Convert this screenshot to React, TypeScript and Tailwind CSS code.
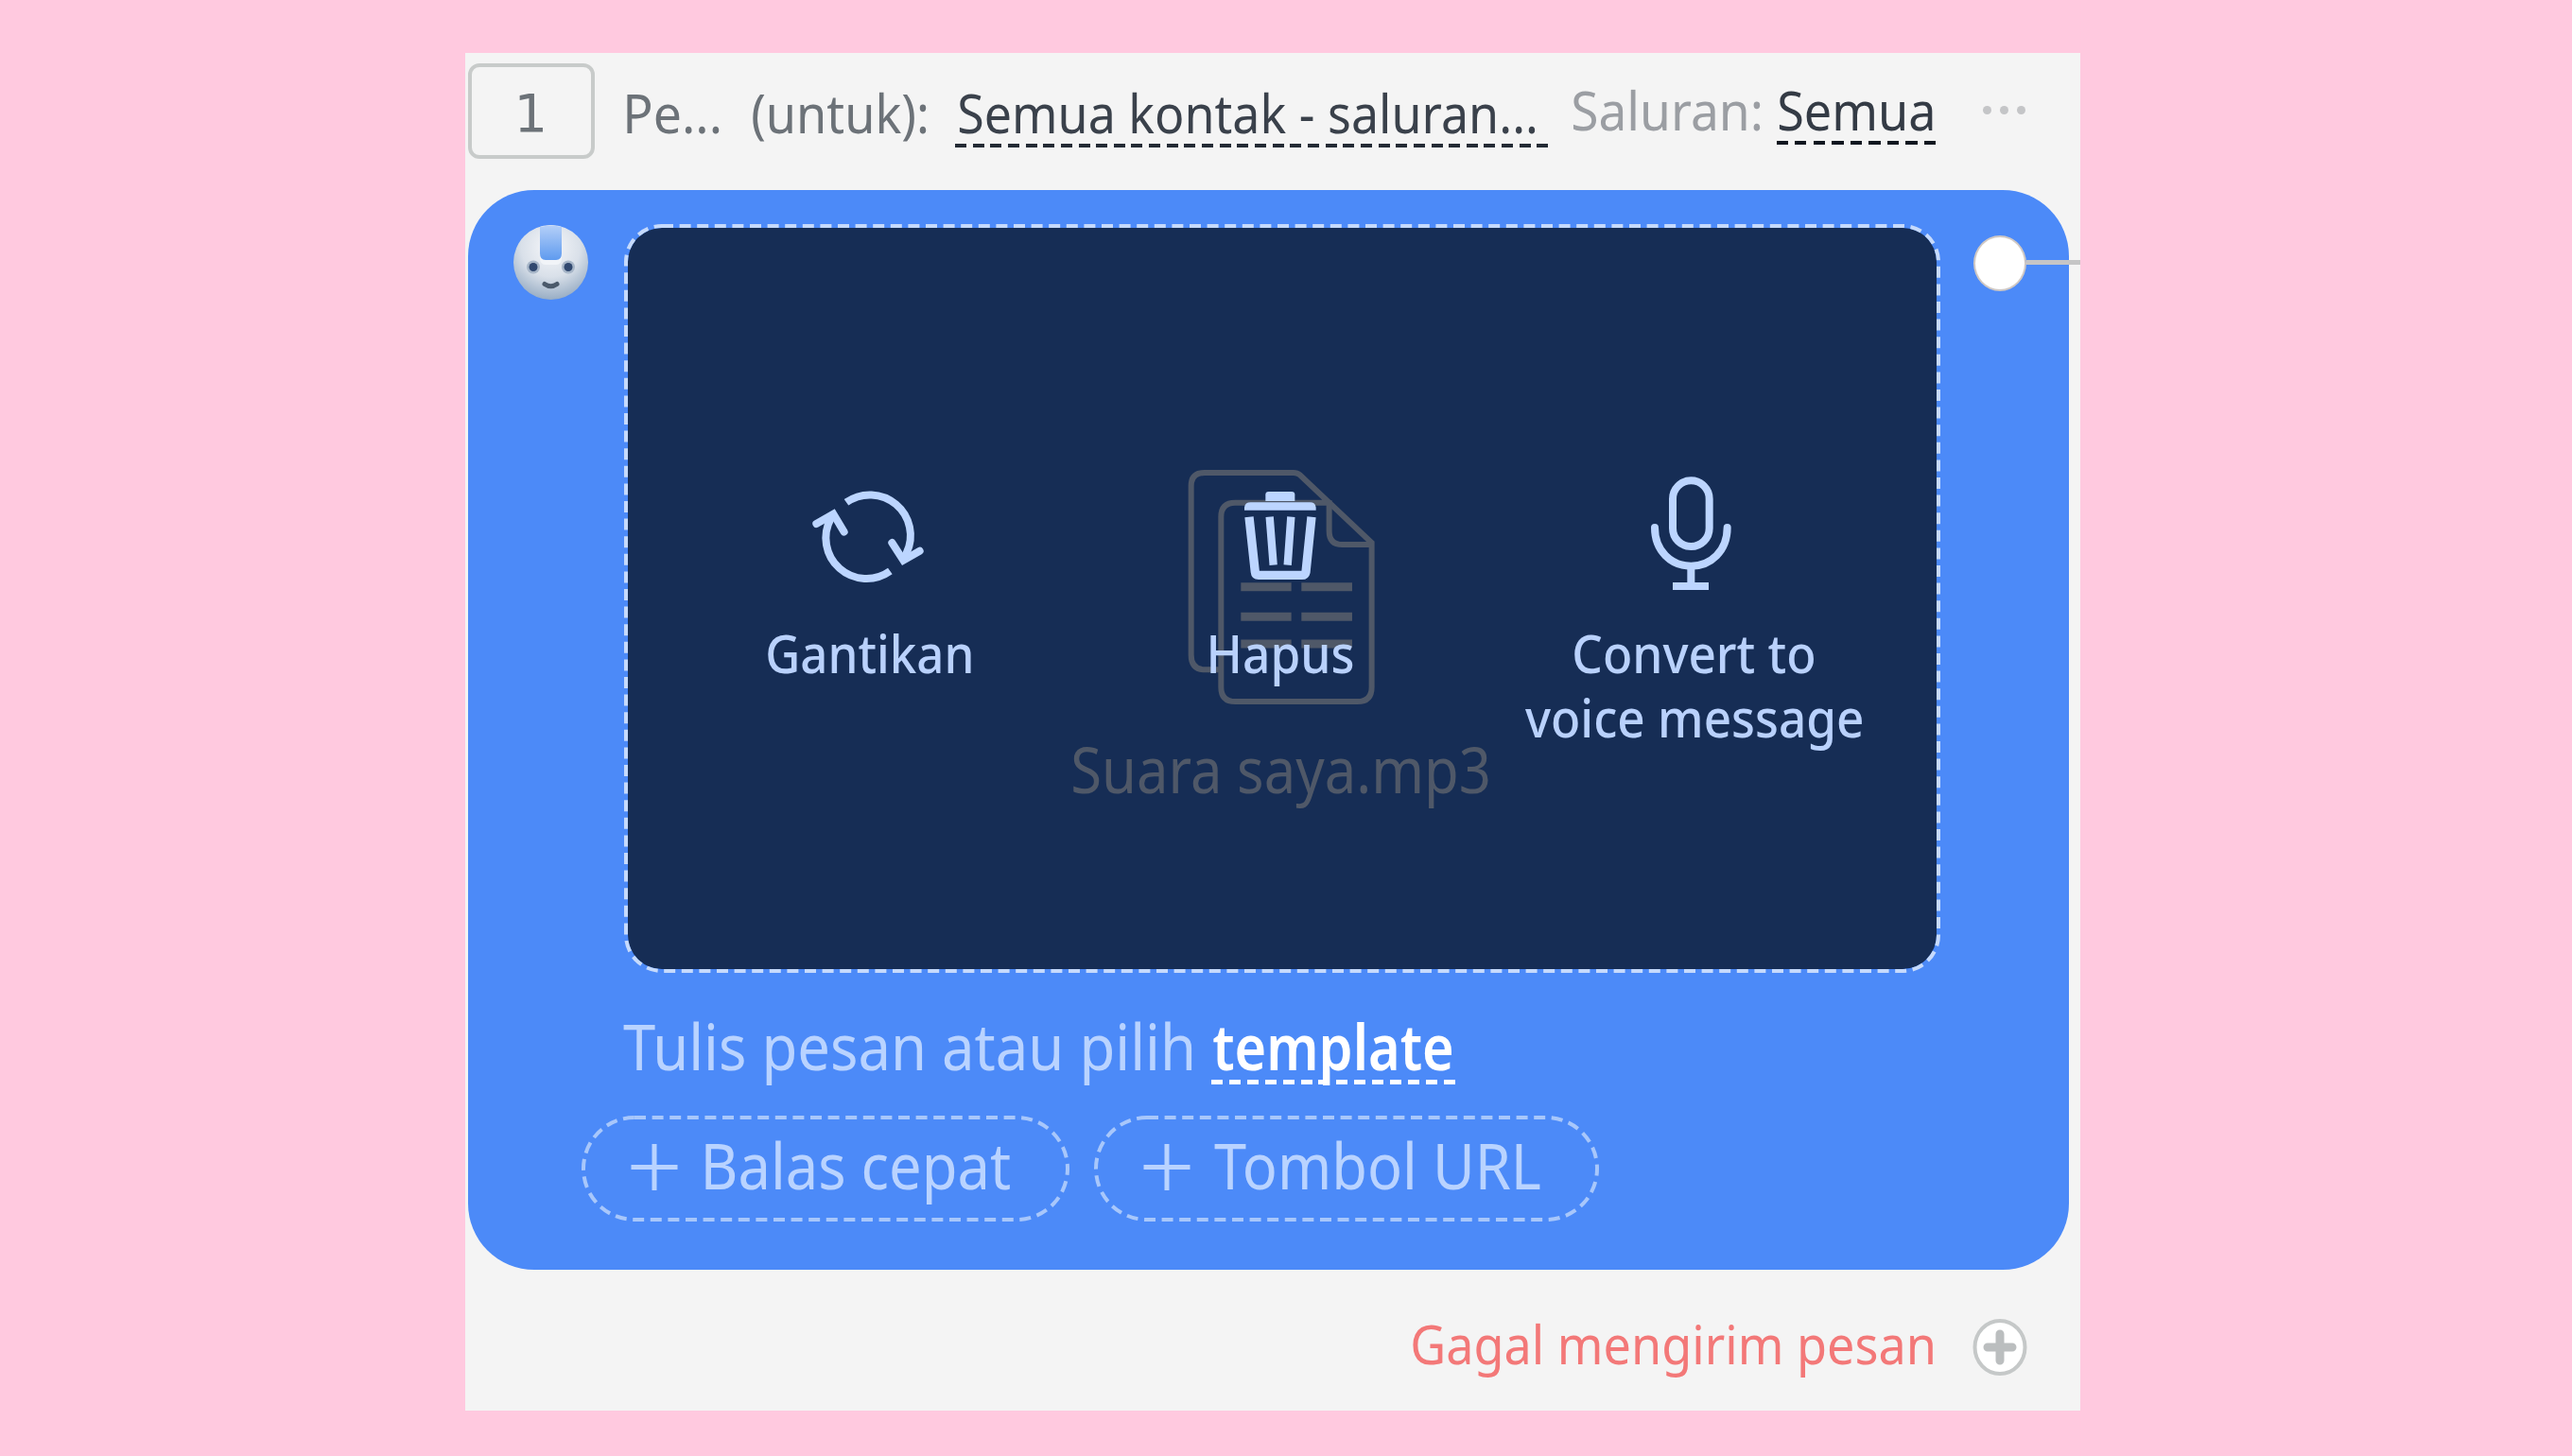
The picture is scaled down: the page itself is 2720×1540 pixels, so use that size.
import React from "react";

const FAMILY = '"Noto Sans", sans-serif';

/** Horizontal bounds of the ink of a line of text at a font size. */
function measureInk(text: string, size: number, weight: number, family: string) {
  const ctx = document.createElement("canvas").getContext("2d")!;
  ctx.font = `${weight} ${size}px ${family}`;
  const m = ctx.measureText(text);
  return { left: m.actualBoundingBoxLeft, width: m.actualBoundingBoxLeft + m.actualBoundingBoxRight };
}

type FitProps = {
  children: string;
  width: number;
  size?: number;
  weight?: number;
  family?: string;
  className?: string;
};

/** One line of text condensed so that it fills exactly `width` pixels. */
function Fit({ children, width, size = 57, weight = 400, family = FAMILY, className = "" }: FitProps) {
  const ink = measureInk(children, size, weight, family);
  const s = width / ink.width;
  return (
    <span
      className={`block shrink-0 whitespace-pre ${className}`}
      style={{ width, fontSize: size, fontWeight: weight, fontFamily: family }}
    >
      <span
        className="inline-block origin-left align-top"
        style={{ transform: `translateX(${ink.left * s}px) scaleX(${s})` }}
      >
        {children}
      </span>
    </span>
  );
}

function DashedFrame({ w, h, r, color }: { w: number; h: number; r: number; color: string }) {
  return (
    <svg className="pointer-events-none absolute inset-0" width={w} height={h} fill="none">
      <rect x="2" y="2" width={w - 4} height={h - 4} rx={r} stroke={color} strokeWidth="4" strokeDasharray="12 6.6" />
    </svg>
  );
}

function RobotAvatar() {
  return (
    <svg className="mt-px ml-12 shrink-0" width="80" height="79" viewBox="0 0 80 79">
      <defs>
        <radialGradient id="head" cx="0.5" cy="0.3" r="0.72">
          <stop offset="0" stopColor="#f6f7fa" />
          <stop offset="0.55" stopColor="#d9e0e9" />
          <stop offset="1" stopColor="#94aac2" />
        </radialGradient>
        <linearGradient id="stripe" x1="0" y1="0" x2="0" y2="1">
          <stop offset="0" stopColor="#b4cff8" />
          <stop offset="1" stopColor="#5f9bef" />
        </linearGradient>
      </defs>
      <ellipse cx="39.500" cy="39.500" rx="39.500" ry="39.500" fill="url(#head)" />
      <path d="M28 2Q40 -1 51 2V35Q51 42 45 42H34Q28 42 28 35Z" fill="#f1f4f8" />
      <path d="M28 2Q40 -1 51 2V30Q51 37 45 37H34Q28 37 28 30Z" fill="url(#stripe)" />
      <circle cx="21" cy="44.500" r="7" fill="#a7b6c8" />
      <circle cx="58" cy="44.500" r="7" fill="#a7b6c8" />
      <circle cx="21" cy="44.500" r="4.500" fill="#30486f" />
      <circle cx="58" cy="44.500" r="4.500" fill="#30486f" />
      <path d="M33 62.500Q39.500 67 46 62.500" fill="none" stroke="#4b5a6b" strokeWidth="5" strokeLinecap="round" />
    </svg>
  );
}

function FilesIcon() {
  return (
    <svg width="203.300" height="253.300" viewBox="460 72 610 760" fill="none" stroke="#4f5868" strokeWidth="18">
      <path d="M572 715H522Q477 715 477 668V132Q477 90 520 90H802Q814 90 822 97L1050 312V770Q1050 816 1005 816H617Q572 816 572 770V230Q572 185 617 185H915" />
      <path d="M915 178V275Q915 318 957 318H1050" />
      <path d="M635 452H795M827 452H988M635 547H795M827 547H988M635 633H795M827 633H988" strokeWidth="27" />
    </svg>
  );
}

const iconProps = {
  width: 128,
  height: 128,
  fill: "none",
  stroke: "#bcd5ff",
  className: "shrink-0",
};

function ReplaceIcon() {
  return (
    <svg {...iconProps} viewBox="225 90 384 384" strokeWidth="24">
      <path d="M345 184A129 129 0 0 1 536 345L528 366" />
      <path d="M484 402A129 129 0 0 1 296 235L304 222" />
      <path d="M490 312L526 368L578 338M250 252L304 221L338 278" strokeLinecap="round" />
    </svg>
  );
}

function TrashIcon() {
  return (
    <svg {...iconProps} viewBox="573 90 384 384" strokeWidth="25">
      <path d="M715 180V160Q715 150 725 150H798Q808 150 808 160V180Z" fill="#bcd5ff" stroke="none" />
      <path d="M648 209V200Q650 184 668 184H856Q873 184 875 200V209Z" fill="#bcd5ff" stroke="none" />
      <path d="M663 230L682 405Q683 415 693 415H831Q841 415 843 405L861 230" strokeWidth="28" />
      <path d="M728 230L740 383M796 230L785 383" />
    </svg>
  );
}

function MicIcon() {
  return (
    <svg {...iconProps} viewBox="441 90 384 384" strokeWidth="24">
      <rect x="567" y="115" width="116" height="209" rx="58" />
      <path d="M510 264C510 338 562 386 625 386S740 338 740 264" strokeLinecap="round" />
      <path d="M625 388V450M567 450H681" />
    </svg>
  );
}

function Action({ icon, children }: { icon: React.ReactNode; children: React.ReactNode }) {
  return (
    <button className="flex w-[436px] flex-col items-center leading-[67.5px] text-[#b9d1fc]">
      {icon}
      <span className="mt-[29px] flex flex-col items-center">{children}</span>
    </button>
  );
}

function AddButton({ w, label, labelWidth, gap }: { w: number; label: string; labelWidth: number; gap: number }) {
  return (
    <button className="relative flex h-28 items-start pt-[16px] pl-[52px] leading-[72px]" style={{ width: w }}>
      <DashedFrame w={w} h={112} r={54} color="#a8c7fb" />
      <svg className="mt-[14px] shrink-0" width="50" height="49" stroke="#b9d3ff" strokeWidth="5">
        <path d="M0.500 24.500H49.500M25 0V49" />
      </svg>
      <span style={{ marginLeft: gap }}>
        <Fit width={labelWidth} size={67}>{label}</Fit>
      </span>
    </button>
  );
}

export default function App() {
  return (
    <div className="h-[1540px] w-[2720px] overflow-hidden bg-[#ffc9df] pt-14 font-['Noto_Sans',sans-serif]">
      <main className="ml-[492px] h-[1436px] w-[1708px] overflow-hidden bg-[#f4f4f4] pl-[3px]">
        <header className="flex h-[145px] items-start leading-[64px] text-[#6c7278]">
          <div className="mt-[11px] flex h-[101px] w-[134px] justify-center rounded-xl border-4 border-[#c8cbca] pt-[17px]">
            <Fit width={25} size={56} family='"DejaVu Sans", sans-serif'>1</Fit>
          </div>
          <Fit width={98} className="mt-[31px] ml-[34px]">Pe...</Fit>
          <Fit width={184} className="mt-[31px] ml-[35px]">(untuk):</Fit>
          <a className="mt-[31px] ml-[30px] w-[631px] text-[#3a414b]">
            <Fit width={610} className="ml-[4px]">Semua kontak - saluran...</Fit>
            <span className="mt-px block h-1 bg-[repeating-linear-gradient(90deg,#242b35_0_12px,transparent_12px_18.65px)]" />
          </a>
          <Fit width={199} className="mt-[28px] ml-[22px] text-[#9b9ea3]">Saluran:</Fit>
          <a className="mt-[28px] ml-[17px] w-[168px] text-[#343b45]">
            <Fit width={163} className="ml-[2px]">Semua</Fit>
            <span className="mt-px block h-1 bg-[repeating-linear-gradient(90deg,#10161f_0_12px,transparent_12px_19.5px)]" />
          </a>
          <div className="mt-[56px] ml-[50px] flex gap-[9px]">
            <i className="size-[9px] rounded-full bg-[#c4c5c7]" />
            <i className="size-[9px] rounded-full bg-[#c4c5c7]" />
            <i className="size-[9px] rounded-full bg-[#c4c5c7]" />
          </div>
        </header>

        <section className="h-[1142px] w-[1693px] rounded-[70px] bg-[#4c8af8] pt-9">
          <div className="flex items-start">
            <RobotAvatar />
            <div className="relative ml-[37px] h-[792px] w-[1392px] shrink-0 rounded-[40px] border-4 border-transparent bg-[#162d55] bg-clip-padding">
              <div className="flex flex-col items-center pt-[253px]">
                <FilesIcon />
                <Fit width={439} size={67} className="mt-[30px] mr-[4px] leading-[72px] text-[#4f5868]">Suara saya.mp3</Fit>
              </div>
              <div className="absolute inset-0 flex pt-[259px] pl-[37px]">
                <Action icon={<ReplaceIcon />}>
                  <Fit width={215} weight={500}>Gantikan</Fit>
                </Action>
                <Action icon={<TrashIcon />}>
                  <Fit width={151} weight={500}>Hapus</Fit>
                </Action>
                <Action icon={<MicIcon />}>
                  <Fit width={253} weight={500}>Convert to</Fit>
                  <Fit width={356} weight={500}>voice message</Fit>
                </Action>
              </div>
              <div className="absolute -inset-1">
                <DashedFrame w={1392} h={792} r={38} color="#c6dafc" />
              </div>
            </div>
            <div className="mt-[12px] ml-[35px] flex shrink-0 items-center">
              <span className="h-[59px] w-[56px] rounded-[50%] border-2 border-[#cfc8c4] bg-white" />
              <span className="-mt-[3px] h-[5px] w-[58px] bg-[#c5c5c6]" />
            </div>
          </div>

          <p className="mt-[41px] flex h-[72px] pl-[164px] leading-[72px] text-[#b9d3ff]">
            <Fit width={601} size={67}>Tulis pesan atau pilih</Fit>
            <a className="ml-[21px] w-[258px] text-white">
              <Fit width={252} size={67} weight={600} className="ml-[2px]">template</Fit>
              <span className="block h-[5px] bg-[repeating-linear-gradient(90deg,#fff_0_12px,transparent_12px_18.9px)]" />
            </a>
          </p>

          <div className="mt-[38px] flex gap-[26px] pl-[120px] text-[#b9d3ff]">
            <AddButton w={516} label="Balas cepat" labelWidth={322} gap={29} />
            <AddButton w={534} label="Tombol URL" labelWidth={345} gap={25} />
          </div>
        </section>

        <footer className="mt-[46px] flex items-start leading-[64px]">
          <Fit width={550} className="ml-[999px] text-[#f37878]">Gagal mengirim pesan</Fit>
          <svg className="mt-[6px] ml-[42px] shrink-0" width="58" height="60" fill="none">
            <ellipse cx="29" cy="30" rx="26.500" ry="28" fill="#fff" stroke="#c5c8c8" strokeWidth="4" />
            <path d="M16 30H42M29 16V44" stroke="#bbbebf" strokeWidth="9" strokeLinecap="round" />
          </svg>
        </footer>
      </main>
    </div>
  );
}
